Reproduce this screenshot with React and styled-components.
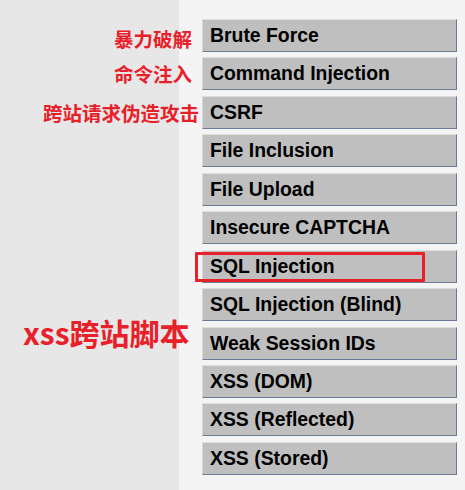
import React from "react";
import styled, { createGlobalStyle } from "styled-components";

const Global = createGlobalStyle`
  html, body { margin: 0; padding: 0; }
  body { width: 465px; height: 490px; overflow: hidden; background: #f4f4f4; }
`;

const Page = styled.div`
  width: 465px;
  height: 490px;
  box-sizing: border-box;
  padding-top: 19px;
  background: linear-gradient(to right, #e7e7e7 0, #e7e7e7 179px, #f4f4f4 179px);
  display: grid;
  grid-template-columns: 202px 255px;
  grid-auto-rows: 33px;
  row-gap: 5.45px;
  align-content: start;
`;

const MenuItem = styled.div`
  grid-column: 2;
  grid-row: ${(p) => p.$row};
  position: relative;
  box-sizing: border-box;
  background: #bfbfbf;
  border-style: solid;
  border-width: 1px;
  border-color: #dedede #6b7a98 #6b7a98 #d9d9d9;
  padding-left: 7px;
  font-family: "Liberation Sans", Arial, sans-serif;
  font-weight: 700;
  font-size: 19.4px;
  line-height: 31px;
  color: #000;
  white-space: nowrap;
`;

const Highlight = styled.span`
  position: absolute;
  left: -8px;
  top: 1.5px;
  width: 230px;
  height: 29.5px;
  box-sizing: border-box;
  border: 3.5px solid #e8202a;
  border-radius: 1px;
`;

const Note = styled.div`
  grid-column: 1 / span 2;
  grid-row: ${(p) => p.$row};
  align-self: center;
  justify-self: ${(p) => (p.$start ? "start" : "end")};
  margin-top: ${(p) => p.$dy || 0}px;
  margin-left: ${(p) => (p.$start ? 23 : 0)}px;
  margin-right: ${(p) => p.$end || 0}px;
  position: relative;
  z-index: 1;
  font-family: "Noto Sans CJK SC", "Noto Sans", sans-serif;
  font-weight: 700;
  font-size: ${(p) => p.$size}px;
  line-height: 1;
  color: #e8202a;
  white-space: nowrap;
`;

const items = [
  "Brute Force",
  "Command Injection",
  "CSRF",
  "File Inclusion",
  "File Upload",
  "Insecure CAPTCHA",
  "SQL Injection",
  "SQL Injection (Blind)",
  "Weak Session IDs",
  "XSS (DOM)",
  "XSS (Reflected)",
  "XSS (Stored)",
];

export default function App() {
  return (
    <>
      <Global />
      <Page>
        {items.map((t, i) => (
          <MenuItem key={t} $row={i + 1}>
            {t}
            {t === "SQL Injection" && <Highlight />}
          </MenuItem>
        ))}
        <Note $row={1} $size={19.5} $end={265} $dy={6}>暴力破解</Note>
        <Note $row={2} $size={19.5} $end={265}>命令注入</Note>
        <Note $row={3} $size={19.5} $end={258} $dy={1.4}>跨站请求伪造攻击</Note>
        <Note $row={9} $size={30} $start $dy={-22}>xss跨站脚本</Note>
      </Page>
    </>
  );
}
